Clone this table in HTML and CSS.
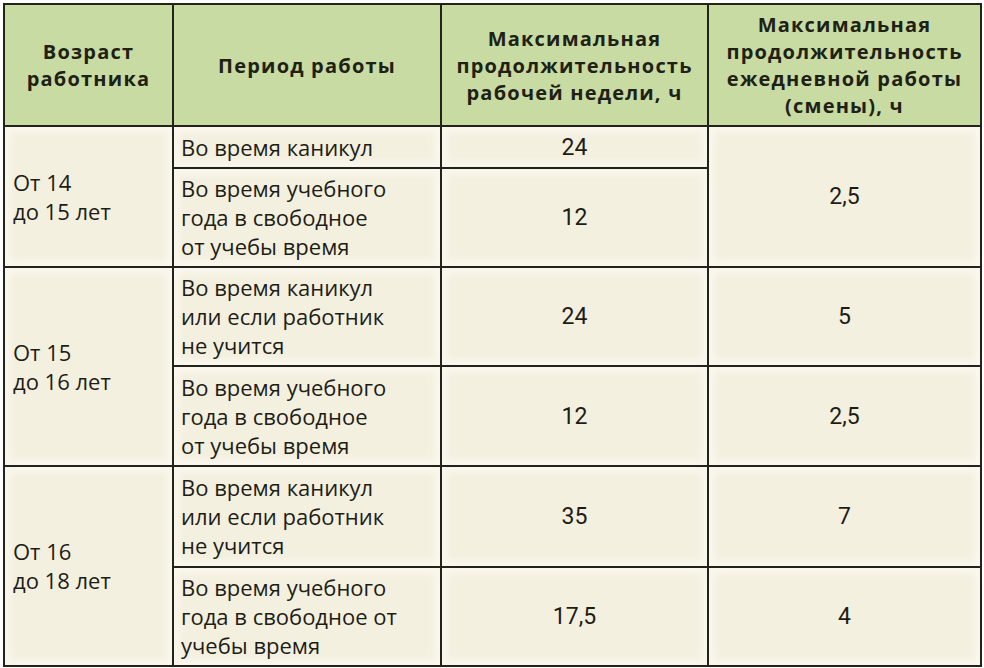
FILE: index.html
```html
<!DOCTYPE html>
<html lang="ru">
<head>
<meta charset="utf-8">
<link rel="stylesheet" href="styles.css">
</head>
<body>
<table class="grid">
  <colgroup>
    <col class="c1"><col class="c2"><col class="c3"><col class="c4">
  </colgroup>
  <thead>
    <tr class="head">
      <th>Возраст<br>работника</th>
      <th>Период работы</th>
      <th>Максимальная<br>продолжительность<br>рабочей недели, ч</th>
      <th class="last">Максимальная<br>продолжительность<br>ежедневной работы<br>(смены), ч</th>
    </tr>
  </thead>
  <tbody>
    <tr class="r1">
      <td rowspan="2" class="age">От 14<br>до 15 лет</td>
      <td class="period">Во время каникул</td>
      <td class="num">24</td>
      <td rowspan="2" class="num">2,5</td>
    </tr>
    <tr class="r2">
      <td class="period">Во время учебного<br>года в свободное<br>от учебы время</td>
      <td class="num">12</td>
    </tr>
    <tr class="r3">
      <td rowspan="2" class="age">От 15<br>до 16 лет</td>
      <td class="period">Во время каникул<br>или если работник<br>не учится</td>
      <td class="num">24</td>
      <td class="num">5</td>
    </tr>
    <tr class="r4">
      <td class="period">Во время учебного<br>года в свободное<br>от учебы время</td>
      <td class="num">12</td>
      <td class="num">2,5</td>
    </tr>
    <tr class="r5">
      <td rowspan="2" class="age">От 16<br>до 18 лет</td>
      <td class="period">Во время каникул<br>или если работник<br>не учится</td>
      <td class="num">35</td>
      <td class="num">7</td>
    </tr>
    <tr class="r6">
      <td class="period">Во время учебного<br>года в свободное от<br>учебы время</td>
      <td class="num">17,5</td>
      <td class="num">4</td>
    </tr>
  </tbody>
</table>
</body>
</html>
```

FILE: styles.css
```css
html, body {
  margin: 0;
  padding: 0;
  background: #ffffff;
}

.grid {
  margin: 3px 0 0 3px;
  width: 977px;
  table-layout: fixed;
  border-collapse: collapse;
  border: 2px solid #23231c;
  font-family: "Open Sans", "Noto Sans", sans-serif;
  color: #1d1d16;
}

.c1 { width: 169px; }
.c2 { width: 268px; }
.c3 { width: 267px; }
.c4 { width: 273px; }

.grid th,
.grid td {
  border: 2px solid #23231c;
  padding: 0;
}

.head { height: 122px; }

.grid th {
  background: #c8dba3;
  font-weight: 700;
  font-size: 20px;
  line-height: 27px;
  letter-spacing: 1.2px;
  text-align: center;
  vertical-align: middle;
  color: #1e2114;
}

.grid td {
  background: #f4f0e0;
  box-shadow: inset 0 0 6px 5px #faf7ee;
  font-size: 22px;
  line-height: 29px;
  vertical-align: middle;
}

.r1 { height: 42px; }
.r2 { height: 99px; }
.r3 { height: 99px; }
.r4 { height: 100px; }
.r5 { height: 101px; }
.r6 { height: 99px; }

.age {
  text-align: left;
  padding-left: 8px !important;
}

.period {
  text-align: left;
  padding-left: 7px !important;
}

.num {
  text-align: center;
  font-family: "Roboto", "Noto Sans", sans-serif;
  font-size: 23px !important;
}
```
